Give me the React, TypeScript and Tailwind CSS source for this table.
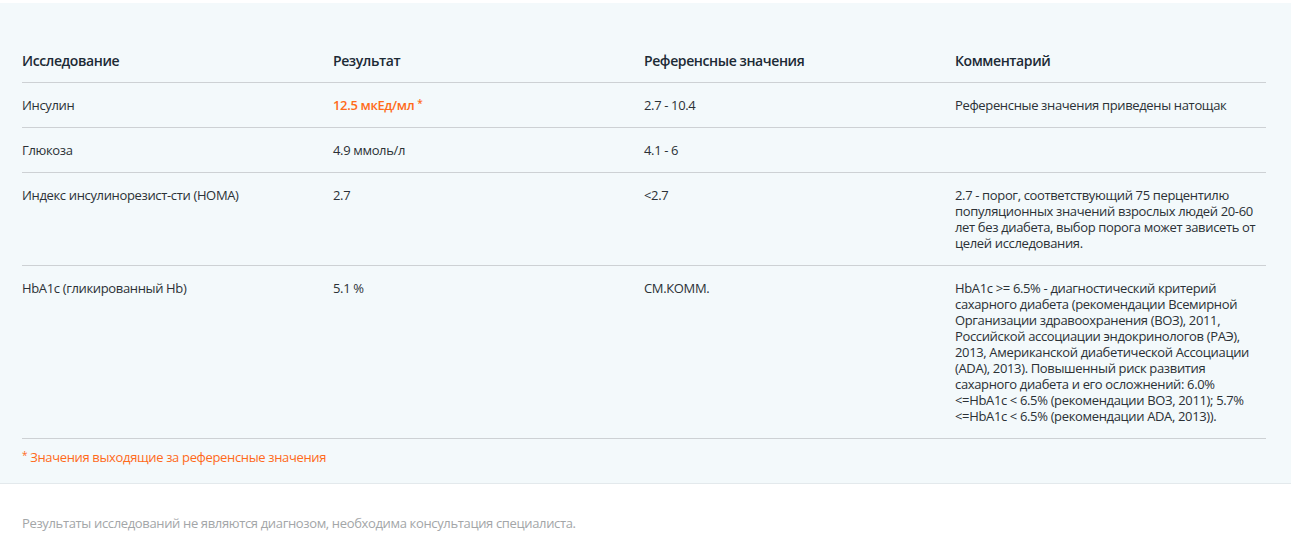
import React from "react";

type Row = {
  name: string;
  result: string;
  high?: boolean;
  reference: string;
  comment: string[];
};

// comment lines are kept as in the lab report layout
const ROWS: Row[] = [
  {
    name: "Инсулин",
    result: "12.5 мкЕд/мл",
    high: true,
    reference: "2.7 - 10.4",
    comment: ["Референсные значения приведены натощак"],
  },
  {
    name: "Глюкоза",
    result: "4.9 ммоль/л",
    reference: "4.1 - 6",
    comment: [],
  },
  {
    name: "Индекс инсулинорезист-сти (HOMA)",
    result: "2.7",
    reference: "<2.7",
    comment: [
      "2.7 - порог, соответствующий 75 перцентилю",
      "популяционных значений взрослых людей 20-60",
      "лет без диабета, выбор порога может зависеть от",
      "целей исследования.",
    ],
  },
  {
    name: "HbA1c (гликированный Hb)",
    result: "5.1 %",
    reference: "СМ.КОММ.",
    comment: [
      "HbA1c >= 6.5% - диагностический критерий",
      "сахарного диабета (рекомендации Всемирной",
      "Организации здравоохранения (ВОЗ), 2011,",
      "Российской ассоциации эндокринологов (РАЭ),",
      "2013, Американской диабетической Ассоциации",
      "(ADA), 2013). Повышенный риск развития",
      "сахарного диабета и его осложнений: 6.0%",
      "<=HbA1c < 6.5% (рекомендации ВОЗ, 2011); 5.7%",
      "<=HbA1c < 6.5% (рекомендации ADA, 2013)).",
    ],
  },
];

const HEADERS = ["Исследование", "Результат", "Референсные значения", "Комментарий"];

export default function App() {
  return (
    <div
      className="min-h-screen bg-white pt-[3px] text-[13px] leading-4 tracking-[-0.35px] text-[#2b3136]"
      style={{ fontFamily: '"Open Sans", "Noto Sans", sans-serif' }}
    >
      <section className="bg-[#f3f9fb] border-b border-[#e3e9ec] px-[22px] pt-[50px] pb-[18px]">
        <div className="w-[1244px]">
          <div className="grid grid-cols-4 border-b border-[#cdd1d4] pb-[13px]">
            {HEADERS.map((h) => (
              <div key={h} className="text-[14px] leading-4 font-semibold tracking-[-0.4px] text-[#1c2a35] pr-[10px]">
                {h}
              </div>
            ))}
          </div>

          {ROWS.map((row) => (
            <div key={row.name} className="grid grid-cols-4 border-b border-[#cdd1d4] py-[14px]">
              <div className="pr-[10px]">{row.name}</div>
              <div className="pr-[10px]">
                {row.high ? (
                  <span className="font-semibold text-[#ff6a1a]">
                    {row.result}{" "}
                    <span className="relative -top-[3px] text-[10px] leading-none">*</span>
                  </span>
                ) : (
                  row.result
                )}
              </div>
              <div className="pr-[10px]">{row.reference}</div>
              <div>
                {row.comment.map((line) => (
                  <span key={line} className="block whitespace-nowrap">
                    {line}
                  </span>
                ))}
              </div>
            </div>
          ))}

          <p className="pt-[10px] text-[#ff6a1a]">
            <span className="relative -top-[3px] text-[10px] leading-none">*</span> Значения выходящие за референсные значения
          </p>
        </div>
      </section>

      <p className="px-[22px] pt-[31px] text-[#a3a6a8]">
        Результаты исследований не являются диагнозом, необходима консультация специалиста.
      </p>
    </div>
  );
}
